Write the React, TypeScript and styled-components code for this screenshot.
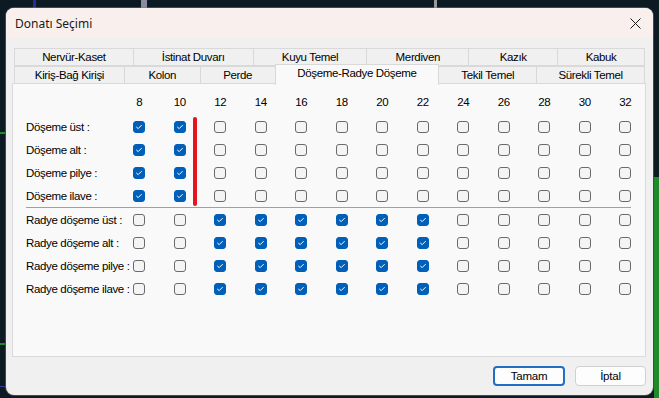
import React from 'react'
import styled, { createGlobalStyle } from 'styled-components'

const GlobalStyle = createGlobalStyle`
  html, body {
    margin: 0;
    padding: 0;
    background: #0c1a24;
  }
  * {
    box-sizing: border-box;
  }
`

const uiFont = `'Liberation Sans', Arial, sans-serif`

const Desktop = styled.div`
  position: relative;
  width: 659px;
  height: 398px;
  overflow: hidden;
  background: #0c1a24;
  padding: 8px 6px 3px 6px;
`

// bits of other windows peeking out behind the dialog
const Streak = styled.div<{ $x: number; $y: number; $w: number; $h: number; $c: string }>`
  position: absolute;
  left: ${(p) => p.$x}px;
  top: ${(p) => p.$y}px;
  width: ${(p) => p.$w}px;
  height: ${(p) => p.$h}px;
  background: ${(p) => p.$c};
`

const Window = styled.div`
  position: relative;
  z-index: 1;
  width: 647px;
  height: 387px;
  display: flex;
  flex-direction: column;
  background: #f0f0f0;
  border-radius: 8px;
  overflow: hidden;
  box-shadow: 0 0 0 1px rgba(120, 120, 120, 0.5);
`

const TitleBar = styled.div`
  height: 30px;
  flex: none;
  display: flex;
  align-items: center;
  justify-content: space-between;
  padding: 0 8px 0 9px;
  background: #f9f0ee;
  font-family: 'Segoe UI', 'Noto Sans', sans-serif;
  font-size: 12px;
  color: #1a1a1a;
`

const CloseButton = styled.div`
  width: 20px;
  height: 20px;
  display: flex;
  align-items: center;
  justify-content: center;
`

const Body = styled.div`
  flex: 1;
  display: flex;
  flex-direction: column;
  padding: 10px 7px 8px 6px;
`

const TabStrip = styled.div`
  display: flex;
  flex-direction: column;
  margin-left: 2px;
  width: 631px;
`

const TabRow = styled.div`
  display: flex;
  height: 18px;
`

const Tab = styled.div<{ $w: number; $active?: boolean }>`
  position: relative;
  width: ${(p) => p.$w + 1}px;
  margin-left: -1px;
  height: ${(p) => (p.$active ? 21 : 18)}px;
  margin-top: ${(p) => (p.$active ? -2 : 0)}px;
  z-index: ${(p) => (p.$active ? 2 : 1)};
  display: flex;
  align-items: ${(p) => (p.$active ? 'flex-start' : 'center')};
  padding-top: ${(p) => (p.$active ? 2 : 0)}px;
  justify-content: center;
  background: ${(p) => (p.$active ? '#f9f9f9' : '#f0f0f0')};
  border: 1px solid #d9d9d9;
  border-bottom: ${(p) => (p.$active ? 'none' : '1px solid #d9d9d9')};
  font-family: ${uiFont};
  font-size: 11.5px;
  letter-spacing: -0.35px;
  color: #000;
  white-space: nowrap;
  &:first-child {
    margin-left: 0;
  }
`

const Panel = styled.div`
  position: relative;
  height: 274px;
  margin-top: -1px;
  width: 634px;
  background: #f9f9f9;
  border: 1px solid #dadada;
  padding: 9px 0 0 12px;
`

const Grid = styled.div`
  display: grid;
  grid-template-columns: 94px repeat(13, 40.5px);
  grid-template-rows: 22px repeat(4, 23px) 1px repeat(4, 23px);
  font-family: ${uiFont};
  font-size: 11.5px;
  letter-spacing: -0.35px;
  color: #000;
`

const HeadCell = styled.div`
  align-self: start;
  height: 18px;
  line-height: 18px;
  text-align: center;
`

const RowLabel = styled.div`
  display: flex;
  align-items: center;
  white-space: nowrap;
  padding-left: 1px;
  padding-top: 1px;
`

const BoxCell = styled.div`
  display: flex;
  align-items: center;
  justify-content: center;
`

const Box = styled.span<{ $checked: boolean }>`
  width: 12px;
  height: 12px;
  border-radius: 3px;
  display: flex;
  align-items: center;
  justify-content: center;
  background: ${(p) => (p.$checked ? '#005fb8' : '#f4f4f4')};
  border: 1px solid ${(p) => (p.$checked ? '#005fb8' : '#6a6a6a')};
`

const Divider = styled.div`
  grid-column: 1 / -1;
  width: 605px;
  margin-left: 1px;
  background: #a0a0a0;
`

const Marker = styled.div`
  position: absolute;
  left: 180px;
  top: 33px;
  width: 4px;
  height: 89px;
  border-radius: 2px;
  background: #e5141e;
`

const Footer = styled.div`
  display: flex;
  justify-content: flex-end;
  gap: 10px;
  margin-top: 9px;
`

const Button = styled.div<{ $primary?: boolean }>`
  width: ${(p) => (p.$primary ? 72 : 71)}px;
  height: 20px;
  display: flex;
  align-items: center;
  justify-content: center;
  border-radius: 4px;
  background: #fdfdfd;
  border: ${(p) => (p.$primary ? '2px solid #1f6fc2' : '1px solid #d0d0d0')};
  font-family: ${uiFont};
  font-size: 11.5px;
  letter-spacing: -0.2px;
  color: #000;
`

const tabsTop = [
  { label: 'Nervür-Kaset', w: 119 },
  { label: 'İstinat Duvarı', w: 120 },
  { label: 'Kuyu Temel', w: 114 },
  { label: 'Merdiven', w: 102 },
  { label: 'Kazık', w: 89 },
  { label: 'Kabuk', w: 87 },
]

const tabsBottom = [
  { label: 'Kiriş-Bağ Kirişi', w: 110 },
  { label: 'Kolon', w: 76 },
  { label: 'Perde', w: 75 },
  { label: 'Döşeme-Radye Döşeme', w: 164, active: true },
  { label: 'Tekil Temel', w: 98 },
  { label: 'Sürekli Temel', w: 108 },
]

const sizes = [8, 10, 12, 14, 16, 18, 20, 22, 24, 26, 28, 30, 32]

const groups = [
  {
    rows: ['Döşeme üst :', 'Döşeme alt :', 'Döşeme pilye :', 'Döşeme ilave :'],
    checked: [8, 10],
  },
  {
    rows: ['Radye döşeme üst :', 'Radye döşeme alt :', 'Radye döşeme pilye :', 'Radye döşeme ilave :'],
    checked: [12, 14, 16, 18, 20, 22],
  },
]

const CheckBox = ({ checked }: { checked: boolean }) => (
  <Box $checked={checked}>
    {checked && (
      <svg width="8" height="8" viewBox="0 0 8 8">
        <path d="M1.6 4.2 L3.2 5.6 L6.4 2.4" fill="none" stroke="#fff" strokeWidth="1" strokeLinecap="round" />
      </svg>
    )}
  </Box>
)

const App = () => {
  return (
    <Desktop>
      <GlobalStyle />
      <Streak $x={33} $y={0} $w={3} $h={8} $c="#2a2a9a" />
      <Streak $x={141} $y={0} $w={6} $h={8} $c="#8a8aa0" />
      <Streak $x={434} $y={0} $w={3} $h={8} $c="#9a9a9a" />
      <Streak $x={0} $y={132} $w={5} $h={2} $c="#1f8a2a" />
      <Streak $x={0} $y={343} $w={5} $h={2} $c="#1f8a2a" />
      <Streak $x={0} $y={386} $w={5} $h={1} $c="#3a3aa0" />
      <Streak $x={654} $y={177} $w={5} $h={221} $c="#1f8a2a" />
      <Window>
        <TitleBar>
          <span>Donatı Seçimi</span>
          <CloseButton>
            <svg width="11" height="11" viewBox="0 0 11 11">
              <path d="M0.5 0.5 L10.5 10.5 M10.5 0.5 L0.5 10.5" stroke="#1a1a1a" strokeWidth="1" />
            </svg>
          </CloseButton>
        </TitleBar>
        <Body>
          <TabStrip>
            <TabRow>
              {tabsTop.map((t) => (
                <Tab key={t.label} $w={t.w}>
                  {t.label}
                </Tab>
              ))}
            </TabRow>
            <TabRow>
              {tabsBottom.map((t) => (
                <Tab key={t.label} $w={t.w} $active={t.active}>
                  {t.label}
                </Tab>
              ))}
            </TabRow>
          </TabStrip>
          <Panel>
            <Grid>
              <div />
              {sizes.map((s) => (
                <HeadCell key={s}>{s}</HeadCell>
              ))}
              {groups.map((g, gi) => (
                <React.Fragment key={gi}>
                  {gi > 0 && <Divider />}
                  {g.rows.map((r) => (
                    <React.Fragment key={r}>
                      <RowLabel>{r}</RowLabel>
                      {sizes.map((s) => (
                        <BoxCell key={s}>
                          <CheckBox checked={g.checked.includes(s)} />
                        </BoxCell>
                      ))}
                    </React.Fragment>
                  ))}
                </React.Fragment>
              ))}
            </Grid>
            <Marker />
          </Panel>
          <Footer>
            <Button $primary>Tamam</Button>
            <Button>İptal</Button>
          </Footer>
        </Body>
      </Window>
    </Desktop>
  )
}

export default App
